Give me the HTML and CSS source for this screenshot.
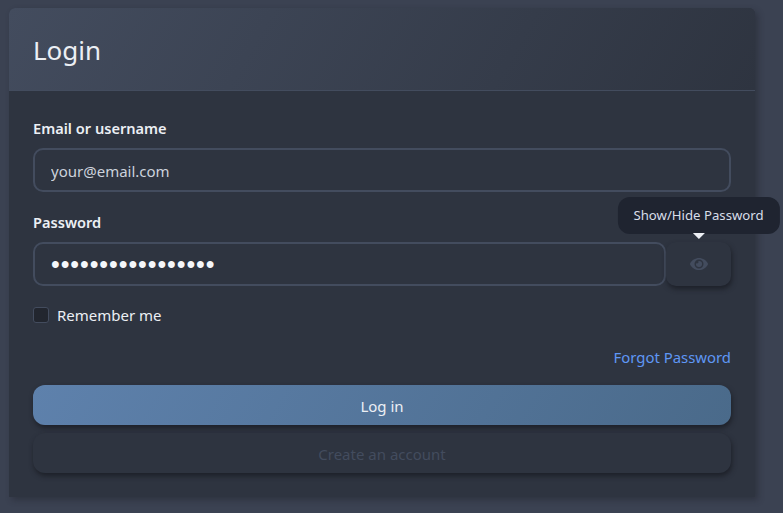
FILE: index.html
```html
<!DOCTYPE html>
<html lang="en">
<head>
    <meta charset="UTF-8">
    <meta name="viewport" content="width=device-width, initial-scale=1.0">
    <title>Login</title>
    <link rel="stylesheet" href="styles.css">
</head>
<body>
    <div class="card">
        <div class="card-header">
            <h1>Login</h1>
        </div>
        <form class="card-body">
            <div class="field">
                <label for="email">Email or username</label>
                <input class="input" id="email" type="text" placeholder="your@email.com">
            </div>
            <div class="field">
                <label for="password">Password</label>
                <div class="input-group">
                    <input class="input" id="password" type="password" value="aaaaaaaaaaaaaaaaa">
                    <div class="toggle-wrap">
                        <button class="toggle" type="button" aria-label="Show/Hide Password">
                            <svg viewBox="0 0 576 512" width="18" height="16">
                                <path d="M572.52 241.4C518.29 135.59 410.93 64 288 64S57.68 135.64 3.48 241.41a32.35 32.35 0 0 0 0 29.19C57.71 376.41 165.07 448 288 448s230.32-71.64 284.52-177.41a32.35 32.35 0 0 0 0-29.19zM288 400a144 144 0 1 1 144-144 143.93 143.93 0 0 1-144 144zm0-240a95.31 95.31 0 0 0-25.31 3.79 47.85 47.85 0 0 1-66.9 66.9A95.78 95.78 0 1 0 288 160z"/>
                            </svg>
                        </button>
                        <div class="tooltip">Show/Hide Password</div>
                    </div>
                </div>
            </div>
            <label class="remember">
                <input type="checkbox">
                <span class="box"></span>
                Remember me
            </label>
            <div class="forgot"><a href="#">Forgot Password</a></div>
            <button class="btn btn-primary" type="button">Log in</button>
            <button class="btn btn-dark" type="button">Create an account</button>
        </form>
    </div>
</body>
</html>
```

FILE: styles.css
```css
* {
    box-sizing: border-box;
}

body {
    margin: 0;
    padding: 8px 28px 16px 9px;
    background-color: #3b4252;
    font-family: "Noto Sans", "Open Sans", sans-serif;
    font-size: 15px;
    color: #eceff4;
}

.card {
    background-color: #2e3440;
    border-radius: 6px 6px 0 0;
    box-shadow: 3px 3px 6px rgba(30, 34, 42, .45);
}

.card-header {
    display: flex;
    align-items: center;
    height: 83px;
    padding: 0 24px 0;
    background: linear-gradient(120deg, #434c5e, #2e3440);
    border-bottom: 1px solid #434c5e;
    border-radius: 6px 6px 0 0;
}

h1 {
    margin: 2px 0 0;
    font-size: 26px;
    font-weight: 400;
}

.card-body {
    display: flex;
    flex-direction: column;
    padding: 27px 24px 24px;
}

.field {
    display: flex;
    flex-direction: column;
    gap: 10px;
    margin-bottom: 20px;
}

.field > label {
    font-weight: 600;
    line-height: 20px;
    font-size: 14.6px;
}

.input {
    width: 100%;
    height: 44px;
    padding: 2px 16px 0;
    background-color: #2e3440;
    border: 2px solid #434c5e;
    border-radius: 10px;
    outline: none;
    font-family: inherit;
    font-size: 15px;
    color: #eceff4;
}

.input::placeholder {
    color: #ccd2dc;
    opacity: 1;
}

.input[type="password"] {
    padding: 0 16px;
    font-family: "Liberation Sans", sans-serif;
    font-size: 25px;
    letter-spacing: .92px;
    color: #f4f6fa;
}

.input-group {
    display: flex;
}

.toggle-wrap {
    position: relative;
    flex: 0 0 65px;
}

.toggle {
    display: flex;
    align-items: center;
    justify-content: center;
    width: 100%;
    height: 44px;
    padding: 0;
    background-color: #2e3440;
    border: none;
    border-radius: 10px;
    box-shadow: 1px 3px 5px rgba(25, 28, 35, .8);
}

.toggle svg {
    fill: #434c5e;
}

.tooltip {
    position: absolute;
    left: 50%;
    bottom: 52px;
    transform: translateX(-50%);
    padding: 0 16px;
    height: 37px;
    line-height: 37px;
    background-color: #1f2430;
    border-radius: 12px;
    font-size: 13.2px;
    white-space: nowrap;
    color: #d8dee9;
}

.tooltip::after {
    content: "";
    position: absolute;
    left: 50%;
    top: 36px;
    margin-left: -6px;
    border-style: solid;
    border-width: 6px 6px 0;
    border-color: #eceff4 transparent transparent;
}

.remember {
    display: flex;
    align-items: center;
    gap: 8px;
    height: 20px;
    margin-top: -1px;
}

.remember input {
    display: none;
}

.box {
    width: 16px;
    height: 16px;
    background-color: #22262f;
    border: 1px solid #434c5e;
    border-radius: 3px;
}

.forgot {
    margin-top: 22px;
    text-align: right;
    line-height: 20px;
    font-size: 14.9px;
}

.forgot a {
    color: #5f97f5;
    text-decoration: none;
}

.btn {
    height: 40px;
    padding: 2px 0 0;
    border: none;
    border-radius: 12px;
    font-family: inherit;
    font-size: 15px;
    box-shadow: 1px 3px 5px rgba(25, 28, 35, .8);
}

.btn-primary {
    margin-top: 18px;
    background: linear-gradient(120deg, #5e81ac, #4a6a8a);
    color: #eceff4;
}

.btn-dark {
    margin-top: 8px;
    background-color: #2e3440;
    color: #434c5e;
}
```
